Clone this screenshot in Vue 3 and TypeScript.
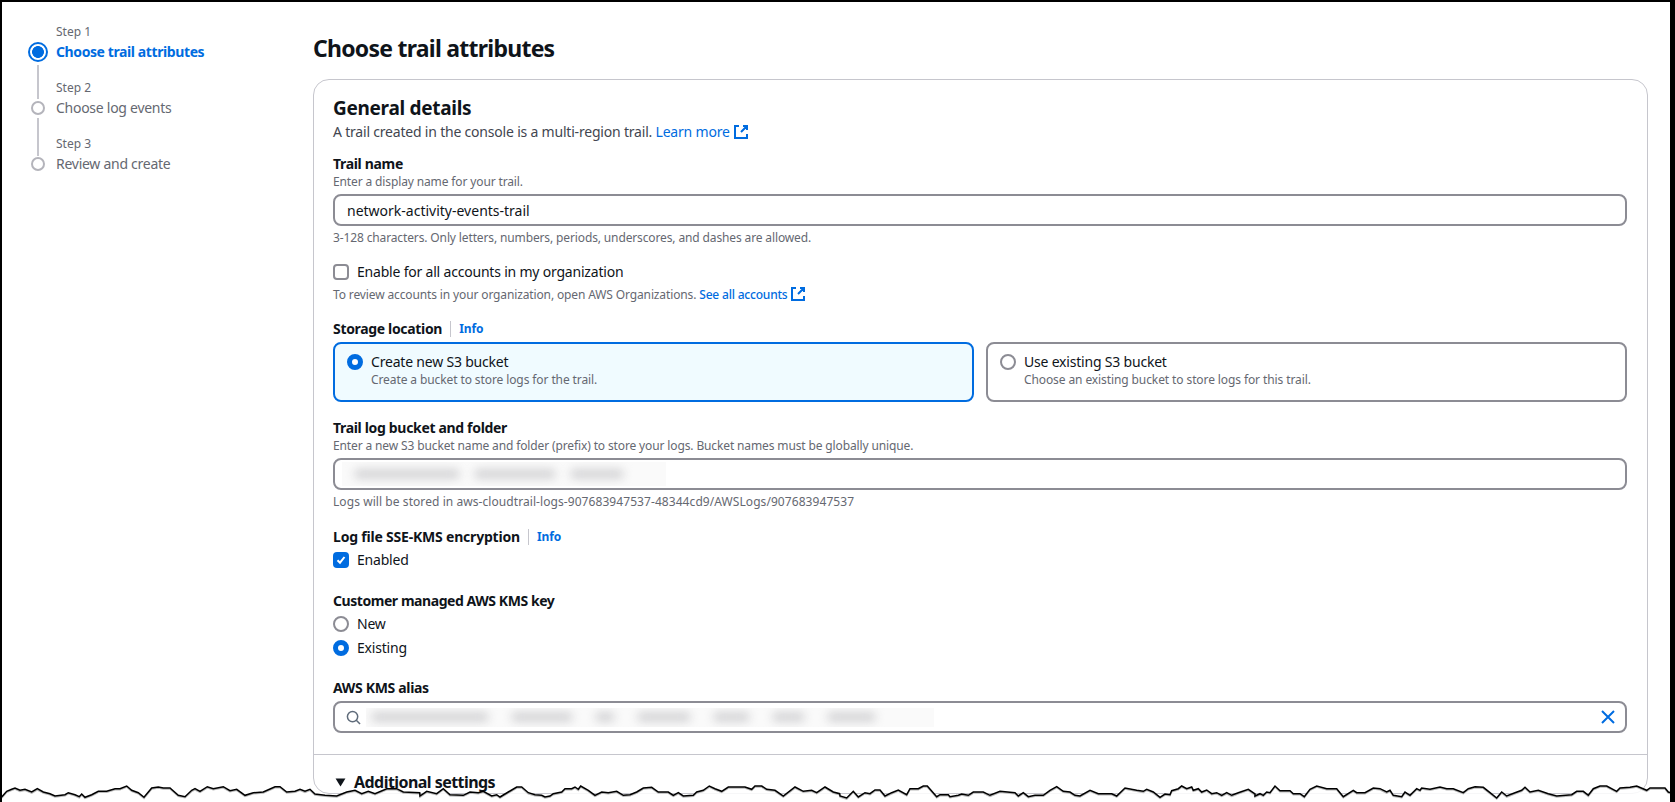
<script setup lang="ts">
const steps = [
  { n: 1, name: 'Choose trail attributes', active: true },
  { n: 2, name: 'Choose log events', active: false },
  { n: 3, name: 'Review and create', active: false },
]

const bucketBlur = [106, 82, 54]
const aliasBlur = [118, 62, 20, 54, 37, 33, 49]

const tornSegments: [number, string][] = [
  [0, '5,75 20,58 35,52 45,48 60,55 75,52 95,60 112,50 130,60 150,65 165,72 195,68 205,62 225,68 238,74 245,66 255,76 275,68 295,58 320,58 345,50 360,50 380,42 395,55 415,62 432,76 455,48 475,45 490,48 510,48 535,70 555,74 575,55 585,50 600,58 622,44 640,50 670,44 690,56 710,52 735,70 760,62 790,60 825,44 840,44 860,60 885,58 900,52 915,58 930,52 945,66 975,70 1010,72 1040,60 1065,55 1085,65 1105,58 1125,65 1160,50 1190,50 1210,60 1259,62'],
  [420, '0,72 20,58 50,65 70,50 90,68 130,70 150,60 175,62 190,58 215,72 230,68 240,75 265,60 290,45 305,45 325,62 345,68 365,70 375,75 390,72 400,65 425,60 435,50 455,50 465,45 475,52 482,42 505,55 525,70 545,60 565,62 590,58 610,70 630,68 650,60 670,48 695,46 715,60 745,60 760,70 775,62 790,72 820,70 830,60 850,55 868,42 885,50 905,58 925,45 945,45 975,45 995,52 1005,42 1025,42 1040,52 1065,55 1090,72 1125,45 1150,58 1175,55 1190,62 1215,45 1240,60 1259,65'],
  [840, '0,72 20,78 40,58 55,75 75,62 90,65 105,54 120,54 135,72 155,62 175,54 200,68 210,50 235,50 250,42 262,42 290,74 300,68 325,68 330,74 355,70 365,66 385,70 400,60 430,60 450,70 480,58 525,62 535,72 550,62 565,74 585,70 610,70 630,55 650,44 670,58 690,60 705,70 720,72 750,55 775,65 815,65 830,72 855,48 890,55 910,58 920,52 940,60 960,76 975,66 990,68 995,56 1015,50 1025,42 1040,50 1055,45 1060,55 1075,50 1085,60 1100,54 1115,65 1130,62 1145,70 1160,62 1175,70 1195,62 1225,52 1245,66'],
  [1255, '0,72 15,65 25,70 35,60 45,62 60,42 75,56 105,56 115,65 135,65 148,74 165,52 185,42 215,50 245,50 265,74 295,55 305,62 330,62 355,48 375,50 395,60 405,55 415,70 440,74 450,60 465,70 485,50 495,55 500,48 525,52 555,45 575,50 595,50 625,62 640,50 660,44 685,46 705,62 725,78 740,60 755,72 780,62 800,55 810,46 825,60 850,55 880,65 905,72 950,68 965,58 985,58 1000,70 1015,50 1035,42 1055,42 1085,58 1095,48 1125,46 1145,42 1175,55 1185,48 1230,48 1240,60 1260,66'],
]

const tornPoints = tornSegments
  .flatMap(([offset, pts]) =>
    pts.split(' ').map((p) => {
      const [x, y] = p.split(',').map(Number)
      return `${(offset + x / 3).toFixed(1)},${(y / 3).toFixed(1)}`
    }),
  )
  .join(' ')
const tornFill = `0,30 ${tornPoints} 1675,22 1675,30`
</script>

<template>
  <div class="page">
    <aside class="wizard">
      <ol class="steps">
        <li v-for="s in steps" :key="s.n" class="step" :class="{ active: s.active }">
          <small class="step-num">Step {{ s.n }}</small>
          <span class="dot"></span>
          <span class="step-name">{{ s.name }}</span>
        </li>
      </ol>
    </aside>

    <main class="main">
      <h1>Choose trail attributes</h1>
      <section class="card">
        <div class="body">
          <h2>General details</h2>
          <p class="lead">
            A trail created in the console is a multi-region trail.
            <a class="link">Learn more
              <svg class="ext" viewBox="0 0 16 16"><path d="M6 2H2v12h12v-4M10 2h4v4M14 2 8 8" /></svg>
            </a>
          </p>

          <div class="field first">
            <div class="label">Trail name</div>
            <div class="hint">Enter a display name for your trail.</div>
            <div class="input with-text">network-activity-events-trail</div>
            <div class="hint below">3-128 characters. Only letters, numbers, periods, underscores, and dashes are allowed.</div>
          </div>

          <div class="field tight">
            <label class="check-row"><span class="box"></span>Enable for all accounts in my organization</label>
            <div class="hint below">
              To review accounts in your organization, open AWS Organizations.
              <a class="link strong">See all accounts
                <svg class="ext" viewBox="0 0 16 16"><path d="M6 2H2v12h12v-4M10 2h4v4M14 2 8 8" /></svg>
              </a>
            </div>
          </div>

          <div class="field tight">
            <div class="label low">Storage location<span class="sep"></span><a class="info">Info</a></div>
            <div class="tiles">
              <div class="tile selected">
                <span class="radio on"></span>
                <div>
                  <div class="tile-title">Create new S3 bucket</div>
                  <div class="tile-desc">Create a bucket to store logs for the trail.</div>
                </div>
              </div>
              <div class="tile">
                <span class="radio"></span>
                <div>
                  <div class="tile-title">Use existing S3 bucket</div>
                  <div class="tile-desc">Choose an existing bucket to store logs for this trail.</div>
                </div>
              </div>
            </div>
          </div>

          <div class="field">
            <div class="label">Trail log bucket and folder</div>
            <div class="hint">Enter a new S3 bucket name and folder (prefix) to store your logs. Bucket names must be globally unique.</div>
            <div class="input redacted-input">
              <div class="redacted bucket">
                <span v-for="(w, i) in bucketBlur" :key="i" class="smear" :style="{ width: w + 'px' }"></span>
              </div>
            </div>
            <div class="hint below path">Logs will be stored in aws-cloudtrail-logs-907683947537-48344cd9/AWSLogs/907683947537</div>
          </div>

          <div class="field">
            <div class="label low loose">Log file SSE-KMS encryption<span class="sep"></span><a class="info">Info</a></div>
            <label class="check-row after-label">
              <span class="box on">
                <svg viewBox="0 0 12 12"><path d="M2.5 6.2 5 8.7l4.5-5.7" /></svg>
              </span>Enabled
            </label>
          </div>

          <div class="field wide">
            <div class="label low narrow">Customer managed AWS KMS key</div>
            <div class="radio-list">
              <label class="check-row"><span class="radio"></span>New</label>
              <label class="check-row"><span class="radio on"></span>Existing</label>
            </div>
          </div>

          <div class="field wide">
            <div class="label">AWS KMS alias</div>
            <div class="input search">
              <svg class="search-icon" viewBox="0 0 16 16"><circle cx="7" cy="7" r="5.5" /><path d="m11 11 4 4" /></svg>
              <div class="redacted alias">
                <span v-for="(w, i) in aliasBlur" :key="i" class="smear" :style="{ width: w + 'px' }"></span>
              </div>
              <svg class="clear-icon" viewBox="0 0 16 16"><path d="m2 2 12 12M14 2 2 14" /></svg>
            </div>
          </div>
        </div>

        <div class="more">
          <svg class="caret" viewBox="0 0 12 10"><path d="M0.5 0.5h11L6 9.5z" /></svg>
          <span>Additional settings</span>
        </div>
      </section>
    </main>

    <svg class="tear" viewBox="0 0 1675 30" aria-hidden="true">
      <polygon class="tear-fill" :points="tornFill" />
      <polyline class="tear-shadow" :points="tornPoints" />
      <polyline class="tear-line" :points="tornPoints" />
    </svg>
  </div>
</template>

<style>
html,
body {
  margin: 0;
  background: #fff;
}
</style>

<style scoped>
.page {
  position: relative;
  box-sizing: border-box;
  width: 1675px;
  height: 802px;
  overflow: hidden;
  display: flex;
  background: #fff;
  border-style: solid;
  border-color: #000;
  border-width: 2px 5px 0 2px;
  font-family: "Noto Sans", "Liberation Sans", sans-serif;
  font-size: 14px;
  line-height: 20px;
  letter-spacing: -0.2px;
  color: #0f141a;
}
.wizard {
  width: 311px;
  flex: none;
  padding-top: 20px;
  box-sizing: border-box;
}
.steps {
  list-style: none;
  margin: 0;
  padding: 0 0 0 26px;
}
.step {
  position: relative;
  display: grid;
  grid-template-columns: 20px 1fr;
  column-gap: 8px;
  grid-template-rows: 20px 20px;
  height: 56px;
  align-items: center;
  color: #656871;
}
.step:not(:last-child)::after {
  content: '';
  position: absolute;
  left: 9px;
  top: 40px;
  height: 38px;
  width: 2px;
  background: #c6c6cd;
}
.step.active::after {
  top: 43px;
  height: 34px;
}
.step-num {
  grid-column: 2;
  grid-row: 1;
  font-size: 12px;
  line-height: 16px;
  letter-spacing: 0;
}
.dot {
  grid-column: 1;
  grid-row: 2;
  justify-self: center;
  box-sizing: border-box;
  width: 14px;
  height: 14px;
  border-radius: 50%;
  border: 2px solid #b4b4bb;
  background: #fff;
}
.step-name {
  grid-column: 2;
  grid-row: 2;
  letter-spacing: -0.27px;
}
.active .dot {
  width: 20px;
  height: 20px;
  border-color: #006ce0;
  background: radial-gradient(circle, #006ce0 0 5.6px, #fff 6.2px);
}
.active .step-name {
  color: #006ce0;
  font-weight: 700;
  letter-spacing: -0.4px;
}
.main {
  flex: 1;
  min-width: 0;
  padding: 31px 22px 0 0;
}
h1 {
  margin: 0 0 16px;
  font-size: 23px;
  line-height: 30px;
  font-weight: 700;
  letter-spacing: -0.75px;
}
.card {
  border: 1px solid #c6c6cd;
  border-radius: 16px;
}
.body {
  padding: 17px 20px 21px 19px;
  border-bottom: 1px solid #c6c6cd;
}
h2 {
  margin: 0;
  font-size: 19px;
  line-height: 22px;
  font-weight: 700;
  letter-spacing: -0.3px;
}
.lead {
  margin: 3px 0 0;
  color: #424650;
}
.link {
  color: #006ce0;
  white-space: nowrap;
}
.link.strong {
  font-weight: 500;
  letter-spacing: -0.2px;
}
.ext {
  width: 16px;
  height: 16px;
  vertical-align: -3px;
  fill: none;
  stroke: #006ce0;
  stroke-width: 2;
}
.field {
  margin-top: 17px;
}
.field.first {
  margin-top: 13px;
}
.field.tight {
  margin-top: 16px;
}
.field.wide {
  margin-top: 21px;
}
.label {
  display: flex;
  align-items: center;
  font-weight: 700;
  line-height: 18px;
  letter-spacing: -0.33px;
}
.label.low {
  padding-top: 1px;
  margin-bottom: -1px;
}
.label.loose {
  letter-spacing: -0.2px;
}
.label.narrow {
  letter-spacing: -0.44px;
}
.sep {
  width: 1px;
  height: 16px;
  margin: 0 8px;
  background: #c6c6cd;
}
.info {
  font-size: 12px;
  color: #006ce0;
  font-weight: 700;
  letter-spacing: -0.1px;
}
.hint {
  font-size: 12px;
  line-height: 16px;
  margin-top: 1px;
  color: #656871;
  letter-spacing: -0.13px;
}
.hint.below {
  margin-top: 4px;
}
.hint.path {
  letter-spacing: 0.07px;
}
.input {
  box-sizing: border-box;
  height: 32px;
  margin-top: 4px;
  border: 2px solid #8c8c94;
  border-radius: 8px;
  display: flex;
  align-items: center;
  background: #fff;
}
.with-text {
  padding: 2px 0 0 12px;
  letter-spacing: 0;
}
.redacted {
  display: flex;
  align-items: center;
  background: #fafafa;
  overflow: hidden;
}
.smear {
  flex: none;
  height: 10px;
  border-radius: 5px;
  background: #d4d4d6;
  filter: blur(5px);
}
.redacted-input {
  padding-left: 7px;
}
.bucket {
  width: 324px;
  height: 24px;
  padding-left: 12px;
  box-sizing: border-box;
  gap: 14px;
}
.alias {
  width: 568px;
  height: 19px;
  padding-left: 5px;
  box-sizing: border-box;
  gap: 22px;
}
.search {
  padding-left: 11px;
  position: relative;
}
.search-icon {
  width: 15px;
  height: 15px;
  margin-right: 5px;
  fill: none;
  stroke: #5f6b7a;
  stroke-width: 1.6;
}
.clear-icon {
  width: 16px;
  height: 16px;
  margin-left: auto;
  margin-right: 9px;
  fill: none;
  stroke: #006ce0;
  stroke-width: 2;
}
.check-row {
  display: flex;
  align-items: center;
  gap: 8px;
  line-height: 20px;
}
.after-label {
  margin-top: 5px;
}
.box {
  box-sizing: border-box;
  width: 16px;
  height: 16px;
  border: 2px solid #8c8c94;
  border-radius: 4px;
  flex: none;
}
.box.on {
  border: 0;
  background: #006ce0;
  display: flex;
  align-items: center;
  justify-content: center;
}
.box svg {
  width: 12px;
  height: 12px;
  fill: none;
  stroke: #fff;
  stroke-width: 2;
}
.radio {
  box-sizing: border-box;
  width: 16px;
  height: 16px;
  border: 2px solid #8c8c94;
  border-radius: 50%;
  flex: none;
  background: #fff;
}
.radio.on {
  border: 5px solid #006ce0;
}
.radio-list {
  margin-top: 5px;
  display: flex;
  flex-direction: column;
  gap: 4px;
}
.tiles {
  margin-top: 5px;
  display: grid;
  grid-template-columns: 1fr 1fr;
  gap: 12px;
}
.tile {
  box-sizing: border-box;
  height: 60px;
  border: 2px solid #8c8c94;
  border-radius: 8px;
  padding: 10px 12px;
  display: flex;
  gap: 8px;
}
.tile.selected {
  border-color: #006ce0;
  background: #f0fbff;
}
.tile > div {
  margin-top: -2px;
}
.tile-title {
  line-height: 20px;
}
.tile-desc {
  font-size: 12px;
  line-height: 16px;
  color: #656871;
  letter-spacing: -0.1px;
}
.more {
  display: flex;
  align-items: center;
  padding: 16px 0 0 21px;
  font-size: 16px;
  line-height: 22px;
  font-weight: 700;
  letter-spacing: -0.55px;
}
.caret {
  width: 11px;
  height: 9px;
  margin-right: 8px;
  fill: #0f141a;
}
.tear {
  position: absolute;
  left: -2px;
  top: 770px;
  width: 1675px;
  height: 30px;
  display: block;
}
.tear-fill {
  fill: #fff;
  fill-opacity: 0.85;
}
.tear-shadow {
  fill: none;
  stroke: #b8b8b8;
  stroke-width: 1.6;
  transform: translateY(1px);
}
.tear-line {
  fill: none;
  stroke: #000;
  stroke-width: 1.5;
}
</style>
